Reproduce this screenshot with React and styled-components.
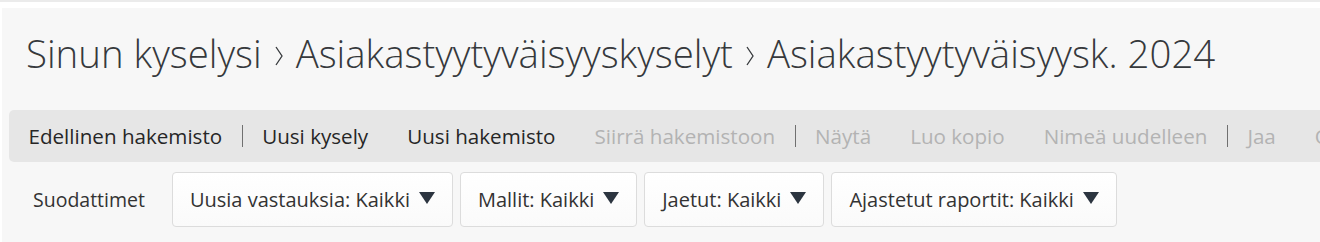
import React from 'react'
import styled, { createGlobalStyle } from 'styled-components'

const GlobalStyle = createGlobalStyle`
  html, body {
    margin: 0;
    padding: 0;
    background: #ffffff;
    overflow: hidden;
  }
  body {
    font-family: "Open Sans", "Liberation Sans", sans-serif;
  }
`

const TopLine = styled.div`
  height: 2px;
  background: #ebebeb;
  margin-bottom: 6px;
`

const Panel = styled.div`
  margin-left: 2px;
  width: 1420px;
  height: 240px;
  background: #f7f7f7;
  padding: 0 7px;
`

const Title = styled.h1`
  display: flex;
  align-items: flex-start;
  margin: 0;
  padding: 24px 0 0 17px;
  height: 102px;
  box-sizing: border-box;
  font-family: "Open Sans", "Liberation Sans", sans-serif;
  font-weight: 300;
  font-size: 38.4px;
  line-height: 42px;
  color: #36393c;
  white-space: nowrap;
`

const Chevron = styled.svg`
  margin: 14px 13px 0 13px;
  flex: none;
`

const Toolbar = styled.div`
  display: flex;
  align-items: center;
  height: 52px;
  background: #e6e6e6;
  border-radius: 5px;
  white-space: nowrap;
`

const Action = styled.span`
  padding: 0 19.5px;
  font-size: 20.6px;
  color: ${p => (p.$disabled ? '#b3b3b3' : '#262626')};
`

const Divider = styled.span`
  width: 1px;
  height: 22px;
  background: #707070;
`

const Filters = styled.div`
  display: flex;
  align-items: center;
  gap: 7px;
  padding: 10px 0 0 24px;
`

const Label = styled.span`
  font-size: 19.5px;
  color: #333;
  margin-right: 20px;
`

const Select = styled.button`
  display: flex;
  align-items: center;
  gap: 9px;
  height: 55px;
  padding: 0 17px;
  border: 1px solid #dcdcdc;
  border-radius: 4px;
  background: linear-gradient(#ffffff, #fafafa);
  font-family: "Open Sans", "Liberation Sans", sans-serif;
  font-size: 20px;
  color: #333;
  cursor: pointer;
`

const Caret = styled.svg`
  flex: none;
  margin-top: -4px;
`

const actions = [
  { label: 'Edellinen hakemisto' },
  { divider: true },
  { label: 'Uusi kysely' },
  { label: 'Uusi hakemisto' },
  { label: 'Siirrä hakemistoon', disabled: true },
  { divider: true },
  { label: 'Näytä', disabled: true },
  { label: 'Luo kopio', disabled: true },
  { label: 'Nimeä uudelleen', disabled: true },
  { divider: true },
  { label: 'Jaa', disabled: true },
  { label: 'Oikeudet', disabled: true },
]

const filters = [
  'Uusia vastauksia: Kaikki',
  'Mallit: Kaikki',
  'Jaetut: Kaikki',
  'Ajastetut raportit: Kaikki',
]

function Sep() {
  return (
    <Chevron width="8" height="20" viewBox="0 0 8 20">
      <polyline points="1,1 7,10 1,19" fill="none" stroke="#36393c" strokeWidth="1.3" />
    </Chevron>
  )
}

export default function App() {
  return (
    <>
      <GlobalStyle />
      <TopLine />
      <Panel>
        <Title>
          <span>Sinun kyselysi</span>
          <Sep />
          <span>Asiakastyytyväisyyskyselyt</span>
          <Sep />
          <span>Asiakastyytyväisyysk. 2024</span>
        </Title>
        <Toolbar>
          {actions.map((a, i) =>
            a.divider ? <Divider key={i} /> : <Action key={i} $disabled={a.disabled}>{a.label}</Action>
          )}
        </Toolbar>
        <Filters>
          <Label>Suodattimet</Label>
          {filters.map(f => (
            <Select key={f}>
              {f}
              <Caret width="16" height="12" viewBox="0 0 16 12">
                <polygon points="0,0 16,0 8,12" fill="#2c3540" />
              </Caret>
            </Select>
          ))}
        </Filters>
      </Panel>
    </>
  )
}
